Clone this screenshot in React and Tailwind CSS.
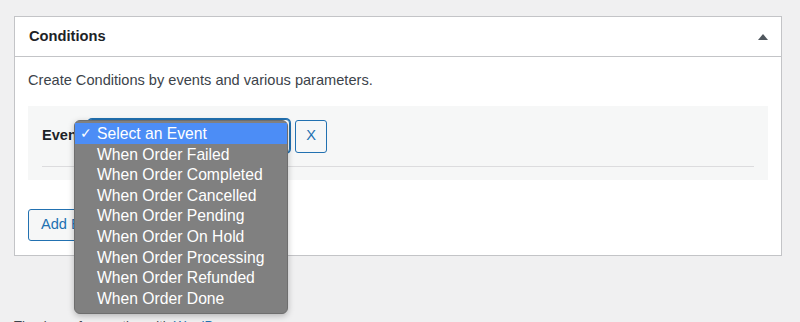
const events = [
  "When Order Failed",
  "When Order Completed",
  "When Order Cancelled",
  "When Order Pending",
  "When Order On Hold",
  "When Order Processing",
  "When Order Refunded",
  "When Order Done",
];

export default function App() {
  return (
    <div
      className="w-[800px] h-[322px] overflow-hidden bg-[#f0f0f1] pt-[16px] px-[14px] text-[#3c434a]"
      style={{ fontFamily: '"Liberation Sans", Arial, sans-serif' }}
    >
      <div className="w-[768px] bg-white border border-[#c3c4c7]">
        <div className="h-[40px] flex items-center justify-between pl-[14px] pr-[12px] border-b border-[#c3c4c7]">
          <h2 className="text-[14.7px] font-bold text-[#1d2327]">Conditions</h2>
          <svg width="12" height="8" viewBox="0 0 12 8">
            <path d="M6 1 L11 7 L1 7 Z" fill="#50575e" />
          </svg>
        </div>
        <div className="px-[13px] pt-[13px] pb-[14px]">
          <p className="text-[14.6px] leading-[20px]">
            Create Conditions by events and various parameters.
          </p>
          <div className="mt-[16px] bg-[#f6f7f7] px-[14px] pt-[13px] pb-[13px]">
            <div className="flex items-center gap-[4px] h-[34px] relative">
              <label className="text-[14.6px] font-bold text-[#1d2327] w-[42px]">Event</label>
              <div className="w-[202px] h-[34px] border border-[#2271b1] rounded-[4px] bg-white shadow-[0_0_0_1px_#2271b1]" />
              <button className="ml-[1px] w-[32px] h-[33px] border border-[#2271b1] rounded-[3px] bg-[#f6f7f7] text-[#2271b1] text-[14.6px]">
                X
              </button>
              <div className="absolute left-[32px] top-[1px] w-[214px] rounded-[6px] border border-[#6e6e6e] bg-[#808080] pt-[2px] pb-[4px] shadow-[0_2px_6px_rgba(0,0,0,0.25)] z-10">
                <div className="h-[21px] flex items-center bg-[#4c8df6] text-white text-[15.7px]">
                  <span className="w-[22px] pl-[5px] text-[14px]">✓</span>
                  <span>Select an Event</span>
                </div>
                {events.map((e) => (
                  <div key={e} className="h-[20.6px] flex items-center text-white text-[15.7px]">
                    <span className="w-[22px]" />
                    <span>{e}</span>
                  </div>
                ))}
              </div>
            </div>
            <div className="mt-[13px] border-t border-[#dcdcde]" />
          </div>
          <button className="mt-[29px] h-[32px] px-[12px] border border-[#2271b1] rounded-[3px] bg-[#f6f7f7] text-[#2271b1] text-[14.6px]">
            Add Event
          </button>
        </div>
      </div>
      <p className="mt-[62px] text-[13px] leading-[16px] text-[#3c434a]">
        Thank you for creating with <span className="text-[#2271b1] underline">WordPress</span>.
      </p>
    </div>
  );
}
